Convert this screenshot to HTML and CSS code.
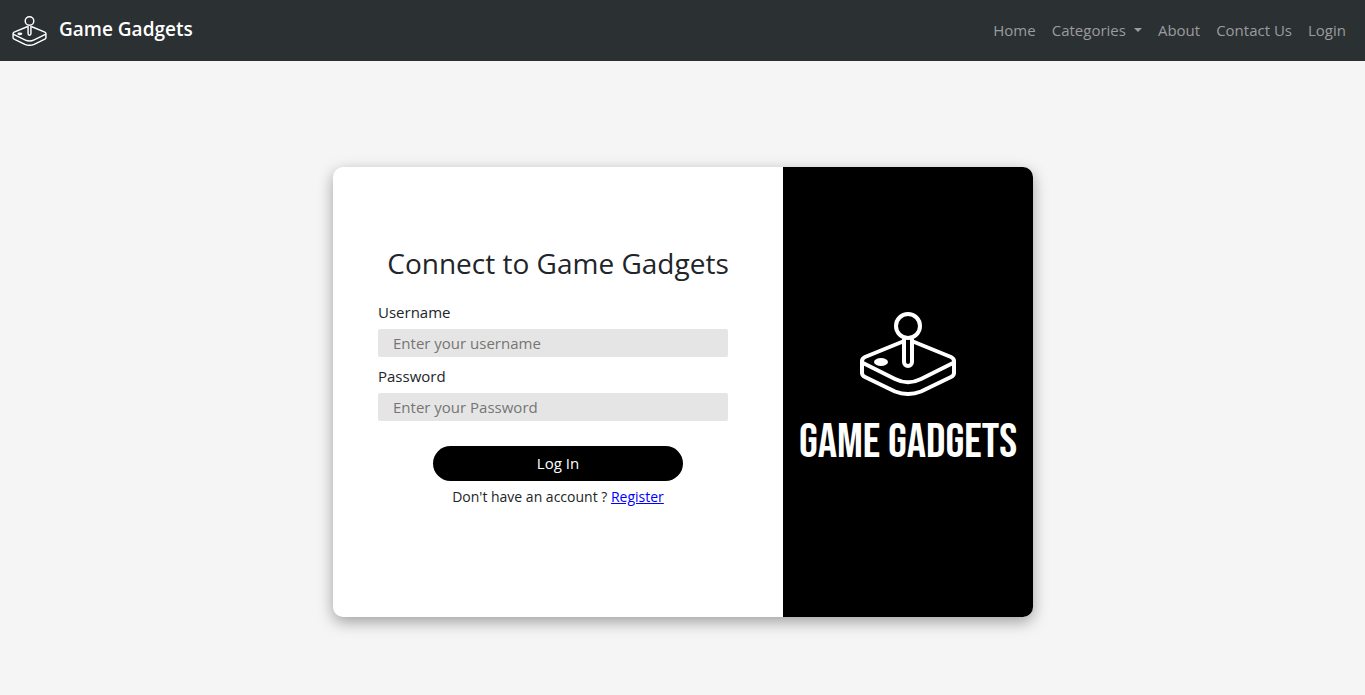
FILE: index.html
```html
<!DOCTYPE html>
<html lang="en">
<head>
<meta charset="utf-8">
<meta name="viewport" content="width=device-width, initial-scale=1">
<title>Game Gadgets</title>
<link rel="stylesheet" href="styles.css">
</head>
<body>
<svg class="defs" aria-hidden="true">
  <symbol id="joystick" viewBox="0 0 96 84">
    <g fill="none" stroke="currentColor" stroke-linejoin="round">
      <circle cx="48" cy="14" r="12"/>
      <path d="M44 27V50a4 4 0 0 0 8 0V27"/>
      <path d="M43 29.5L5 45Q2 46.500 2 49V61Q2 63.500 5 65L35 79.500Q48 84.500 61 79.500L91 65Q94 63.500 94 61V49Q94 46.500 91 45L53 29.500"/>
      <path d="M2 50.500L35 67Q48 73.500 61 67L94 50.500"/>
    </g>
    <ellipse cx="21" cy="50" rx="7" ry="4" fill="currentColor"/>
  </symbol>
</svg>
<header class="navbar">
  <a class="brand" href="#"><svg class="brand-icon" aria-hidden="true"><use href="#joystick"/></svg><span>Game Gadgets</span></a>
  <nav class="nav-links">
    <a href="#">Home</a>
    <a class="dropdown" href="#">Categories</a>
    <a href="#">About</a>
    <a href="#">Contact Us</a>
    <a href="#">Login</a>
  </nav>
</header>
<main class="page">
  <div class="card">
    <form class="login">
      <h1>Connect to Game Gadgets</h1>
      <div class="field">
        <label for="username">Username</label>
        <input id="username" type="text" placeholder="Enter your username">
      </div>
      <div class="field">
        <label for="password">Password</label>
        <input id="password" type="password" placeholder="Enter your Password">
      </div>
      <button type="submit">Log In</button>
      <p class="register">Don't have an account ? <a href="#">Register</a></p>
    </form>
    <aside class="banner">
      <svg class="banner-icon" aria-hidden="true"><use href="#joystick"/></svg>
      <h2>GAME GADGETS</h2>
    </aside>
  </div>
</main>
</body>
</html>
```
FILE: styles.css
```css
* { box-sizing: border-box; }

body {
  margin: 0;
  background: #f5f5f5;
  color: #212529;
  font: 16px/24px "Trebuchet MS", "Open Sans", sans-serif;
}

.defs { position: absolute; width: 0; height: 0; }

.navbar {
  display: flex;
  align-items: center;
  justify-content: space-between;
  min-height: 61px;
  padding: 0 19px 0 12px;
  background: #2b3033;
}

.brand {
  display: flex;
  align-items: center;
  gap: 12px;
  color: #fff;
  font-size: 19px;
  font-weight: 600;
  text-decoration: none;
}

.brand span { padding-bottom: 3px; }

.brand-icon { width: 35px; height: 30px; stroke-width: 4px; }

.nav-links {
  display: flex;
  gap: 16px;
  padding-bottom: 2px;
  font-size: 15px;
  font-weight: 500;
}

.nav-links a { color: #9a9c9e; text-decoration: none; }

.dropdown::after {
  content: "";
  display: inline-block;
  margin-left: 8px;
  vertical-align: 4px;
  border-top: 4px solid;
  border-right: 4px solid transparent;
  border-left: 4px solid transparent;
}

.page { display: flex; justify-content: center; padding: 106px 16px 64px 17px; }

.card {
  display: flex;
  width: 100%;
  max-width: 700px;
  min-height: 450px;
  overflow: hidden;
  border-radius: 10px;
  background: #fff;
  box-shadow: 0 5px 15px rgba(0, 0, 0, 0.35);
}

.login {
  flex: 1;
  display: flex;
  flex-direction: column;
  align-items: center;
  min-width: 0;
  padding: 76px 55px 0 45px;
}

h1 {
  margin: 0 0 17px 10px;
  font-size: 28px;
  font-weight: 400;
  line-height: 40px;
  white-space: nowrap;
}

.field { display: flex; flex-direction: column; width: 100%; margin-bottom: 7px; }
.field label { margin-bottom: 5px; font-size: 15px; }

.field input {
  height: 28px;
  padding: 0 15px;
  border: 0;
  border-radius: 2px;
  background: #e5e5e5;
  font: inherit;
  font-size: 15px;
}

.field input::placeholder { color: #757575; }

button {
  width: 250px;
  height: 35px;
  margin: 18px 0 4px 10px;
  padding: 0 0 2px;
  border: 0;
  border-radius: 18px;
  background: #000;
  color: #fff;
  font: inherit;
  font-size: 15px;
}

.register { margin: 0 0 0 10px; font-size: 14px; }
.register a { color: #00f; }

.banner {
  flex: 0 0 250px;
  display: flex;
  flex-direction: column;
  align-items: center;
  padding-top: 145px;
  background: #000;
  color: #fff;
}

.banner-icon { width: 96px; height: 84px; stroke-width: 4px; }

h2 {
  margin: 19px 0 0;
  font-family: "Bebas Neue", "Roboto Condensed", sans-serif;
  font-size: 48px;
  font-weight: 500;
  line-height: 56px;
  white-space: nowrap;
}
```
